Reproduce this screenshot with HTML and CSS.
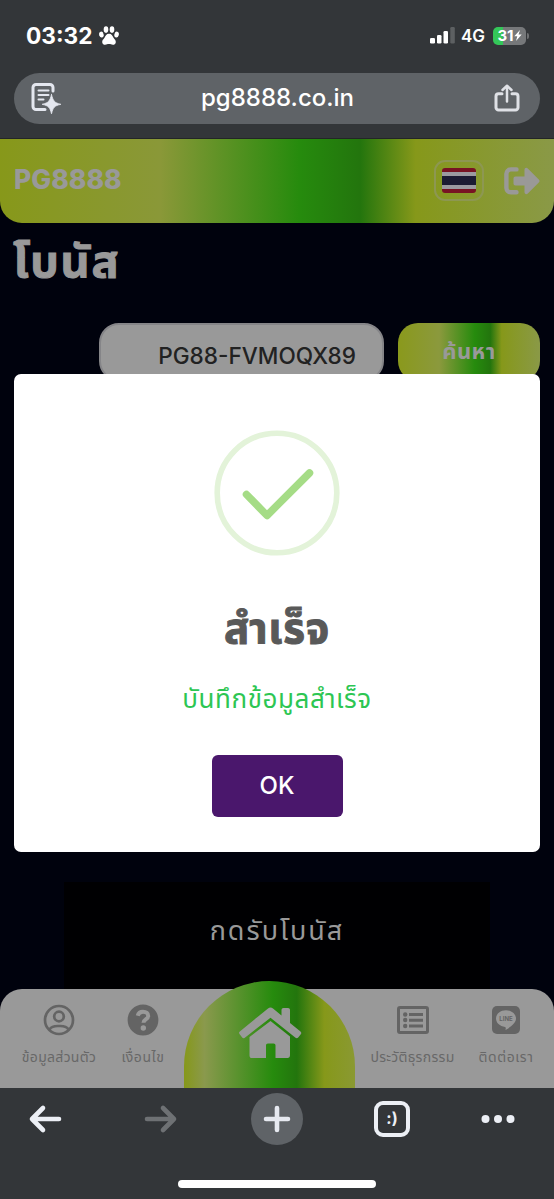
FILE: index.html
```
<!DOCTYPE html>
<html lang="th">
<head>
<meta charset="utf-8">
<meta name="viewport" content="width=device-width, initial-scale=1">
<title>PG8888</title>
<link rel="stylesheet" href="styles.css">
</head>
<body>
<div class="phone">
  <div class="browser-top">
    <div class="status">
      <span class="time">03:32</span>
      <svg class="paw" viewBox="0 0 20 19" width="20" height="19" fill="#fff"><ellipse cx="7" cy="3.6" rx="2.3" ry="3.3"/><ellipse cx="13" cy="3.6" rx="2.3" ry="3.3"/><ellipse cx="2.4" cy="8.6" rx="2.2" ry="3" transform="rotate(-15 2.4 8.6)"/><ellipse cx="17.6" cy="8.6" rx="2.2" ry="3" transform="rotate(15 17.6 8.6)"/><path d="M10 7.8c2.6 0 3.400 2.200 4.500 3.900 1.200 1.700 2.300 2.500 2.300 4.200 0 1.800-1.300 2.900-2.900 2.900-1.500 0-2.300-.7-3.900-.7s-2.400.7-3.900.7c-1.600 0-2.900-1.100-2.900-2.900 0-1.700 1.100-2.500 2.300-4.200C6.600 10 7.400 7.800 10 7.800z"/></svg>
      <svg class="signal" viewBox="0 0 26 17" width="26" height="17"><g fill="#fff"><rect x="0" y="11" width="5" height="5.500" rx="1.300"/><rect x="7" y="8" width="4.500" height="8.500" rx="1.300"/><rect x="13.500" y="4" width="4.500" height="12.500" rx="1.300"/></g><rect x="20.300" y="0" width="4.500" height="16.500" rx="1.300" fill="#5d6062"/></svg>
      <span class="net">4G</span>
      <span class="battery"><span class="level">31</span><svg viewBox="0 0 8 11" width="8" height="11"><path d="M6 0 .3 6.300h3L2 11l5.700-6.500H4.500z" fill="#fff"/></svg></span>
      <span class="nub"></span>
    </div>
    <div class="urlbar">
      <svg viewBox="0 0 30 32" width="30" height="32" fill="none" stroke="#e4e7ef" stroke-width="3" stroke-linecap="round" stroke-linejoin="round"><path d="M22 9V5.500a3 3 0 0 0-3-3H5a3 3 0 0 0-3 3v19a3 3 0 0 0 3 3h9" /><path d="M7.500 8.500h10M7.500 13h10M7.500 17.500h5" stroke-width="2"/><path d="M20.500 12.500c1.700 6.500 2.700 8.300 9.400 9.800-6.700 1.500-7.700 3-9.400 9.500-1.700-6.500-2.700-8-9.400-9.500 6.700-1.500 7.700-3.300 9.400-9.800z" fill="#e4e7ef" stroke="#e4e7ef" stroke-width=".8"/></svg>
      <span class="host">pg8888.co.in</span>
      <svg viewBox="0 0 26 28" width="26" height="28" fill="none" stroke="#dfe1e6" stroke-width="3" stroke-linecap="round" stroke-linejoin="round"><path d="M8 9.700H4.500a2.500 2.500 0 0 0-2.500 2.500v11.300a2.500 2.500 0 0 0 2.500 2.500h17a2.500 2.500 0 0 0 2.500-2.500V12.200a2.500 2.500 0 0 0-2.500-2.500H18"/><path d="M13 17.500V2.500M8.500 6 13 1.700 17.500 6" stroke-width="2.500"/></svg>
    </div>
  </div>

  <main class="page">
    <header class="site-head">
      <span class="brand">PG8888</span>
      <span class="lang"><span class="flag"></span></span>
      <svg viewBox="0 0 36 28" width="36" height="28"><path d="M12.500 2.400H7A4.500 4.500 0 0 0 2.400 7v14A4.500 4.500 0 0 0 7 25.300h5.500" fill="none" stroke="#9a9997" stroke-width="4.400" stroke-linecap="round"/><path d="M11.500 9.500h9V3c0-2 1.800-2.800 3.300-1.500l11 11c1 1 1 2 0 3l-11 11c-1.500 1.300-3.300.500-3.300-1.500v-6.500h-9c-1.200 0-2-.8-2-2v-5c0-1.200.8-2 2-2z" fill="#9a9997"/></svg>
    </header>
    <h1 class="title"><span>โบนัส</span></h1>
    <div class="search">
      <div class="field">PG88-FVMOQX89</div>
      <button class="find">ค้นหา</button>
    </div>
    <section class="claim">กดรับโบนัส</section>
    <nav class="tabs">
      <a class="tab profile"><svg viewBox="0 0 32 32" width="32" height="32" fill="none" stroke="#646464" stroke-width="2.700"><circle cx="16" cy="16" r="14"/><circle cx="16" cy="12.500" r="4.800"/><path d="M6.500 25.500c2.500-4 6-3.500 9.500-3.500s7-.5 9.500 3.500"/></svg><span>ข้อมูลส่วนตัว</span></a>
      <a class="tab terms"><svg viewBox="0 0 32 32" width="32" height="32"><circle cx="16" cy="16" r="15.400" fill="#646464"/><path d="M10.700 11.700C11.500 8.800 13.500 7.700 16 7.700c3.200 0 5.200 1.700 5.200 4.200 0 3.600-4.700 3.500-4.700 6.800" fill="none" stroke="#999" stroke-width="4"/><circle cx="16.300" cy="24" r="2.700" fill="#999"/></svg><span>เงื่อนไข</span></a>
      <a class="home"><svg viewBox="0 0 64 52" width="64" height="52" fill="#999"><path d="M30 1.500c1.700-1.400 3.300-1.400 5 0l8.500 7V3c0-1.200.8-2 2-2H50c1.200 0 2 .8 2 2v13l10.500 8.500c1 .8 1 1.800.3 2.700l-2.600 3.200c-.8 1-1.800 1-2.700.3L32.500 10.700 6.800 30.800c-1 .8-1.900.6-2.600-.3L1.500 27c-.8-1-.6-1.900.3-2.600z"/><path d="M32.500 14 52 29.500V48c0 2-.8 3-2.500 3H37.500V38.500c0-1.300-.7-2-2-2H30c-1.300 0-2 .7-2 2V51H14c-1.700 0-2.500-.9-2.500-2.600V30z"/></svg></a>
      <a class="tab history"><svg viewBox="0 0 32 28" width="32" height="28"><rect x="1.500" y="1.500" width="29" height="25" rx="1.500" fill="none" stroke="#646464" stroke-width="3"/><g fill="#646464"><circle cx="8.200" cy="8.500" r="2.200"/><circle cx="8.200" cy="14" r="2.200"/><circle cx="8.200" cy="20" r="2.200"/><path d="M12 7h14v3H12zM12 12.700h14v3H12zM12 18.600h14v3H12z"/></g></svg><span>ประวัติธุรกรรม</span></a>
      <a class="tab contact"><svg viewBox="0 0 28 28" width="28" height="28"><rect width="28" height="28" rx="5" fill="#646464"/><path d="M14 4.300c5.700 0 10 3.700 10 8.300 0 4.500-5.200 8.500-10.500 11.300.4-1.700.5-2.700-.5-3-5.200-.5-9-4-9-8.300 0-4.600 4.300-8.300 10-8.300z" fill="#999"/><text x="14" y="15.300" text-anchor="middle" class="line-word">LINE</text></svg><span>ติดต่อเรา</span></a>
    </nav>

    <div class="modal" role="dialog">
      <svg class="ok-ring" viewBox="0 0 126 126" width="126" height="126" fill="none"><circle cx="63" cy="63" r="59.800" stroke="#e3f3d9" stroke-width="5.600"/><path d="m32.500 64.500 20.500 21 42.500-42.500" stroke="#a5dc86" stroke-width="7.500" stroke-linecap="round" stroke-linejoin="round"/></svg>
      <h2><span>สำเร็จ</span></h2>
      <p><span>บันทึกข้อมูลสำเร็จ</span></p>
      <button class="ok">OK</button>
    </div>
  </main>

  <footer class="browser-bottom">
    <div class="tools">
      <svg viewBox="0 0 34 30" width="34" height="30" fill="none" stroke="#eceff5" stroke-width="4.600" stroke-linecap="round" stroke-linejoin="round"><path d="M31 15H4M15 4 4 15l11 11"/></svg>
      <svg viewBox="0 0 34 30" width="34" height="30" fill="none" stroke="#6e7174" stroke-width="4.600" stroke-linecap="round" stroke-linejoin="round"><path d="M3 15h27M19 4l11 11-11 11"/></svg>
      <span class="plus"><svg viewBox="0 0 28 28" width="28" height="28" stroke="#e6e9f0" stroke-width="4.600" stroke-linecap="round"><path d="M14 3v22M3 14h22"/></svg></span>
      <span class="face">:)</span>
      <svg viewBox="0 0 34 10" width="34" height="10" fill="#eceff5"><circle cx="4.500" cy="5" r="4"/><circle cx="17" cy="5" r="4"/><circle cx="29.500" cy="5" r="4"/></svg>
    </div>
    <div class="handle"></div>
  </footer>
</div>
</body>
</html>
```
FILE: styles.css
```
* { box-sizing: border-box; }
body { margin: 0; background: #333639; font-family: Inter, "Noto Sans Thai", "Noto Sans", sans-serif; }
h1, h2, p { margin: 0; }
button { border: 0; padding: 0; font-family: inherit; }
svg { display: block; flex: none; }
.phone { width: 554px; height: 1199px; display: flex; flex-direction: column; overflow: hidden; }

.browser-top { height: 138px; background: #333639; color: #fff; }
.status { height: 72px; padding: 0 26px 1px; display: flex; align-items: center; }
.time { font-size: 22.7px; font-weight: 700; width: 73px; white-space: nowrap; }
.signal { margin-left: auto; margin-right: 5px; }
.net { font-size: 17px; font-weight: 600; width: 32px; }
.battery { width: 33px; height: 18px; border-radius: 5px; display: flex; align-items: center; justify-content: center; background: linear-gradient(90deg, #34c759 0 10px, #76787a 10px); font-size: 15px; font-weight: 700; }
.nub { width: 2px; height: 6px; margin-left: 1px; border-radius: 0 2px 2px 0; background: #6e7072; margin-right: -1px; }
.urlbar { height: 51px; margin: 1px 14px 0; border-radius: 26px; background: #5f6367; display: flex; align-items: center; justify-content: space-between; padding: 0 20px 1px 17px; }
.host { font-size: 24px; font-weight: 500; padding-bottom: 2px; }

.page { height: 950px; position: relative; display: flex; flex-direction: column; background: #00020d; border-top: 1px solid #232527; }
.site-head { height: 84px; flex: none; border-radius: 0 0 22px 22px; padding: 0 14px 1px; display: flex; align-items: center; background: linear-gradient(90deg, #87981a 0, #8a9838 29%, #268b0d 54%, #23750d 65%, #86981a 75%, #8a9947 100%); }
.brand { flex: 1; font-size: 26.5px; font-weight: 800; color: #999; padding-bottom: 3px; }
.lang { width: 50px; height: 41px; border: 2px solid #8d9752; border-radius: 11px; display: grid; place-items: center; margin-right: 20px; }
.flag { width: 34px; height: 25px; border-radius: 3px; background: linear-gradient(#781323 0 4px, #9b99a0 4px 8px, #1c1b33 8px 17px, #9b99a0 17px 21px, #781323 21px); }
.title { height: 100px; flex: none; padding: 7px 13px; font-size: 45px; font-weight: 700; line-height: 62px; letter-spacing: 1.8px; color: #999; -webkit-text-stroke: 1px #999; }
.search { height: 58px; flex: none; padding: 0 14px 0 99px; display: flex; gap: 14px; }
.field { width: 285px; border-radius: 20px; background: #999; border: 2px solid #858588; padding: 16px 26px 0; text-align: right; font-size: 22.6px; font-weight: 500; line-height: 30px; color: #222; white-space: nowrap; }
.find { flex: 1; border-radius: 20px; background: linear-gradient(90deg, #8a991c 0, #8b993d 29%, #268b0d 54%, #23750d 65%, #86981a 73%, #8a9947 100%); color: #999; font-size: 22px; font-weight: 700; letter-spacing: .4px; }
.claim { width: 426px; height: 110px; margin: 501px 0 0 64px; flex: none; background: #000002; color: #999; text-align: center; font-size: 27px; letter-spacing: 2px; line-height: 98px; }
.tabs { position: absolute; left: 0; right: 0; bottom: 0; height: 99px; border-radius: 22px 22px 0 0; background: #999; display: grid; grid-template-columns: 118px 66px 171px 115px 84px; grid-template-rows: 99px; align-items: end; }
.tab { height: 99px; display: flex; flex-direction: column; align-items: center; color: #686868; font-size: 14px; white-space: nowrap; }
.tab svg { margin-top: 15px; }
.tab span { line-height: 24px; margin-top: 9px; letter-spacing: .3px; }
.terms { margin-right: 16px; }
.terms span, .contact span { letter-spacing: .6px; }
.history svg { margin-top: 17px; }
.history span { margin-top: 11px; }
.contact { margin-right: 12px; }
.contact svg { margin-top: 17px; }
.contact span { margin-top: 11px; }
.home { height: 107px; border-radius: 86px 86px 0 0; display: flex; justify-content: center; padding-top: 26px; background: linear-gradient(90deg, #86981a 0, #8a994d 12%, #268b0d 52%, #23750d 66%, #86981a 82%, #8a9932 100%); }
.line-word { font: 700 6px Inter, sans-serif; fill: #646464; }

.modal { position: absolute; left: 14px; top: 235px; width: 526px; height: 478px; border-radius: 7px; background: #fff; display: flex; flex-direction: column; align-items: center; padding-top: 56px; }
.modal h2 { margin-top: 41px; height: 62px; line-height: 62px; font-size: 42px; font-weight: 700; letter-spacing: .8px; color: #595959; -webkit-text-stroke: 1px #595959; white-space: nowrap; }
.modal p { margin-top: 20px; height: 40px; line-height: 40px; font-size: 26px; letter-spacing: .6px; color: #2dc653; white-space: nowrap; }
.ok { margin-top: 36px; width: 131px; height: 62px; border-radius: 6px; background: #4a176c; color: #fff; font-size: 24px; font-weight: 500; padding-bottom: 1px; }

.browser-bottom { height: 111px; background: #333639; display: flex; flex-direction: column; align-items: center; }
.tools { width: 100%; height: 62px; display: grid; grid-template-columns: 90px 142px 90px 140px 72px; align-items: center; justify-items: center; }
.plus { width: 52px; height: 52px; border-radius: 50%; background: #5f6367; display: grid; place-items: center; }
.face { width: 36px; height: 36px; border: 4px solid #eceff5; border-radius: 9px; color: #eceff5; font-size: 16px; font-weight: 700; line-height: 27px; text-align: center; }
.handle { width: 198px; height: 8px; border-radius: 4px; background: #fff; margin-top: 30px; }
```
